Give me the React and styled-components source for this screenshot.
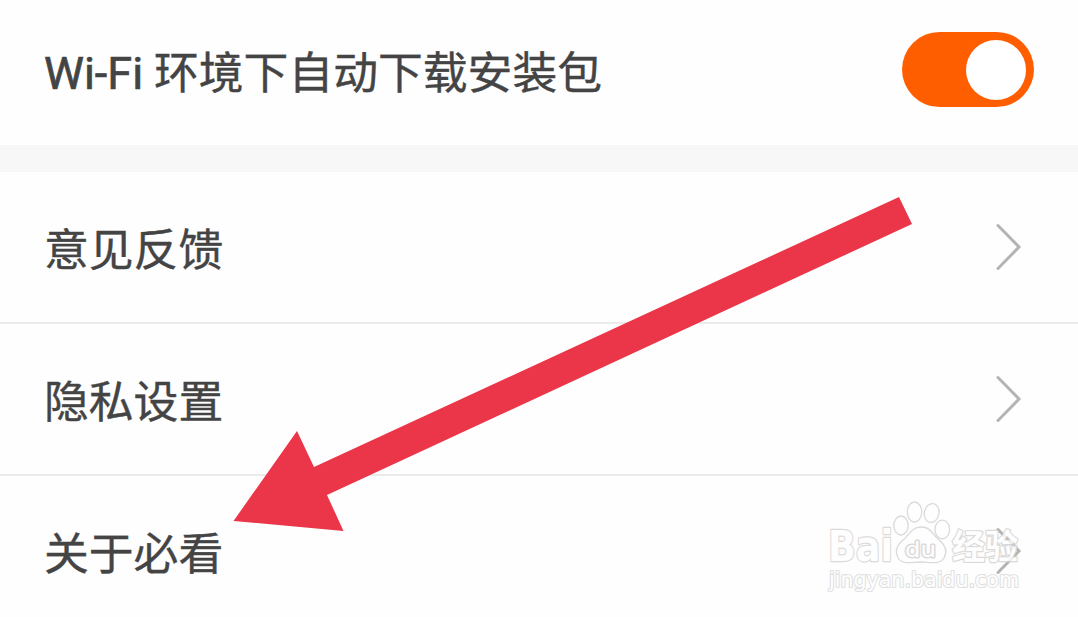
import React from 'react';
import styled, { createGlobalStyle } from 'styled-components';

const rows = ['意见反馈', '隐私设置', '关于必看'];

function App() {
    return (
        <Page>
            <GlobalStyle />
            <SwitchRow>
                <Label><Latin>Wi-Fi</Latin>环境下自动下载安装包</Label>
                <Switch role="switch" aria-checked="true">
                    <Knob />
                </Switch>
            </SwitchRow>
            <Band />
            <List>
                {rows.map((name) => (
                    <Row key={name}>
                        <Label>{name}</Label>
                        <Chevron />
                    </Row>
                ))}
            </List>
            <Arrow />
            <Watermark />
        </Page>
    );
}

function Chevron() {
    return (
        <ChevronIcon viewBox="0 0 28 48">
            <path d="M3 2.5L24 24L3 45.5" />
        </ChevronIcon>
    );
}

function Arrow() {
    return (
        <ArrowIcon viewBox="0 0 680 336">
            <path d="M0.5 325L64 235L81 271L666 1L679 28L94 299L110.5 335Z" />
        </ArrowIcon>
    );
}

function Watermark() {
    return (
        <Mark viewBox="820 495 210 105">
            <LogoText x="828" y="560.5" fontSize="42" textLength="65" lengthAdjust="spacingAndGlyphs">Bai</LogoText>
            <ellipse cx="901" cy="525.5" rx="7.2" ry="9.5" />
            <ellipse cx="914.5" cy="512" rx="7.2" ry="10" />
            <ellipse cx="931.7" cy="513" rx="7.3" ry="9.5" transform="rotate(12 931.7 513)" />
            <ellipse cx="942.3" cy="529.5" rx="7.3" ry="9.3" />
            <path d="M921 527C911 527 909 536 902 541C896 546 895 552 898 558C902 565 912 562 921 562C930 562 940 565 944 558C948 551 945 545 939 540C932 534 931 527 921 527Z" />
            <LogoText $light x="905" y="556.5" fontSize="22" textLength="31" lengthAdjust="spacingAndGlyphs">du</LogoText>
            <LogoText $cjk x="952" y="559" fontSize="34" textLength="66" lengthAdjust="spacingAndGlyphs">经验</LogoText>
            <UrlText x="829" y="587" fontSize="20.5" textLength="190" lengthAdjust="spacingAndGlyphs">jingyan.baidu.com</UrlText>
        </Mark>
    );
}

const GlobalStyle = createGlobalStyle`
    body {
        margin: 0;
        background-color: #fefefe;
    }
`
const Page = styled.div`
    position: relative;
    height: 617px;
    overflow: hidden;
    background-color: #fefefe;
    color: #444;
    font-family: Roboto, "Noto Sans CJK SC", sans-serif;
`
const SwitchRow = styled.div`
    display: flex;
    align-items: center;
    justify-content: space-between;
    box-sizing: border-box;
    height: 145px;
    padding: 0 44px 6px 44px;

    & > :first-child {
        padding-top: 4px;
    }
`
const Band = styled.div`
    height: 27px;
    background-color: #f7f7f7;
`
const List = styled.div`
    display: flex;
    flex-direction: column;
`
const Row = styled.div`
    display: flex;
    align-items: center;
    justify-content: space-between;
    box-sizing: border-box;
    height: 152px;
    padding: 0 55px 0 44px;
    border-bottom: 2px solid #ebebeb;

    &:last-child {
        border-bottom-color: transparent;
    }
`
const Label = styled.div`
    font-family: "Noto Sans CJK SC", sans-serif;
    font-size: 44.8px;
    line-height: 60px;
    white-space: nowrap;
    -webkit-text-stroke: 0.4px #444;
`
const Latin = styled.span`
    display: inline-block;
    width: 110px;
    font-family: Roboto, sans-serif;
    font-size: 45px;
    -webkit-text-stroke: 0.7px #444;
`
const Switch = styled.div`
    display: flex;
    align-items: center;
    justify-content: flex-end;
    box-sizing: border-box;
    width: 132px;
    height: 75px;
    padding-right: 8px;
    border-radius: 38px;
    background-color: #ff5e00;
`
const Knob = styled.div`
    width: 60px;
    height: 60px;
    border-radius: 50%;
    background-color: #fff;
`
const ChevronIcon = styled.svg`
    width: 28px;
    height: 48px;
    fill: none;
    stroke: #b4b4b4;
    stroke-width: 3;
    stroke-linecap: round;
`
const ArrowIcon = styled.svg`
    position: absolute;
    left: 233px;
    top: 196px;
    width: 680px;
    height: 336px;
    fill: #eb3549;
`
const Mark = styled.svg`
    position: absolute;
    left: 820px;
    top: 495px;
    width: 210px;
    height: 105px;
    overflow: visible;
    opacity: 0.8;
    fill: #fff;
    stroke: #d2d2d2;
    stroke-width: 1.3;
    stroke-linejoin: round;
`
const LogoText = styled.text`
    font-family: ${({ $cjk }) => ($cjk ? '"Noto Sans CJK SC"' : '"DejaVu Sans"')}, sans-serif;
    font-weight: ${({ $light }) => ($light ? 400 : 700)};
    stroke-width: ${({ $light }) => ($light ? 3 : 2.4)};
    paint-order: stroke;
`
const UrlText = styled.text`
    font-family: "DejaVu Sans", sans-serif;
    font-weight: 400;
    stroke: #dadada;
    stroke-width: 2.2;
    paint-order: stroke;
`

export default App;
